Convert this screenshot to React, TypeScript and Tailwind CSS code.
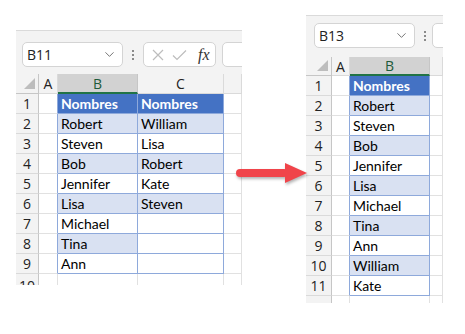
import React from 'react';
import { ChevronDown } from 'lucide-react';

type Cell = { text?: string; band?: boolean; inTable?: boolean };

type SheetProps = {
  nameBox: string;
  showFx: boolean;
  colWidths: number[];
  letters: string[];
  selectedCol: number;
  headerH: number;
  rows: Cell[][];
  extraRow: number;
  barH: number;
  boxTop: string;
  boxH: string;
  dotsGap: string;
};

const fontCell = { fontFamily: 'Lato, "Liberation Sans", sans-serif' };
const fontUi = { fontFamily: '"Open Sans", "Noto Sans", sans-serif' };

const Dots = () => (
  <div className="flex flex-col gap-[2px] items-center">
    <span className="w-[2px] h-[2px] bg-[#8a8a8a]" />
    <span className="w-[2px] h-[2px] bg-[#8a8a8a]" />
    <span className="w-[2px] h-[2px] bg-[#8a8a8a]" />
  </div>
);

const Sheet: React.FC<SheetProps> = ({ nameBox, showFx, colWidths, letters, selectedCol, headerH, rows, extraRow, barH, boxTop, boxH, dotsGap }) => {
  const template = colWidths.map((w) => `${w}px`).join(' ');
  return (
    <div className="bg-[#f3f3f3] border-t border-[#dadada] overflow-hidden flex flex-col" style={{ width: colWidths.reduce((a, b) => a + b, 0) }}>
      {/* formula bar */}
      <div className={`flex items-start shrink-0 ${boxTop}`} style={{ height: barH }}>
        <div className={`w-[101px] shrink-0 ${boxH} bg-white border border-[#d4d4d4] rounded-[5px] flex items-center justify-between pl-[4px] pr-[5px] text-[14px] text-[#222]`} style={fontUi}>
          <span>{nameBox}</span>
          <ChevronDown size={15} strokeWidth={1.3} className="text-[#555]" />
        </div>
        <div className={`${dotsGap} flex items-center shrink-0 ${boxH}`}>
          <Dots />
        </div>
        {showFx && (
          <div className={`ml-[9px] w-[73px] ${boxH} bg-white border border-[#d4d4d4] rounded-[5px] flex items-center pl-[7px] gap-[8px] shrink-0`}>
            <svg width="12" height="12" viewBox="0 0 12 12" className="ml-[1px]">
              <path d="M1 1 L11 11 M11 1 L1 11" stroke="#bdbdbd" strokeWidth="1.2" fill="none" />
            </svg>
            <svg width="15" height="12" viewBox="0 0 15 12">
              <path d="M1 6.5 L5 10.5 L14 1.5" stroke="#bdbdbd" strokeWidth="1.2" fill="none" />
            </svg>
            <span className="italic text-[16px] text-[#333] ml-[3px]" style={{ fontFamily: '"Liberation Serif", serif' }}>fx</span>
          </div>
        )}
        <div className={`ml-[6px] w-[40px] ${boxH} bg-white border border-[#d4d4d4] rounded-[5px] shrink-0`} />
      </div>
      {/* grid */}
      <div className="grid bg-white" style={{ gridTemplateColumns: template }}>
        {/* column headers */}
        <div className="bg-[#f3f3f3] border-r border-b border-[#c6c6c6] relative" style={{ height: headerH }}>
          <svg width="11" height="11" viewBox="0 0 11 11" className="absolute right-[3px] bottom-[4px]">
            <polygon points="11,0 11,11 0,11" fill="#bdbdbd" />
          </svg>
        </div>
        {letters.map((l, i) => (
          <div
            key={l}
            className={`flex items-center justify-center text-[14px] ${
              i === selectedCol
                ? 'bg-[#d2d2d2] text-[#1e5b3a] border-b-2 border-b-[#217346] border-r border-r-[#c6c6c6]'
                : 'bg-[#f3f3f3] text-[#222] border-b border-r border-[#dadada]'
            }`}
            style={{ ...fontUi, height: headerH }}
          >
            {l}
          </div>
        ))}
        {/* rows */}
        {rows.map((cells, r) => (
          <React.Fragment key={r}>
            <div className="h-[20px] bg-[#f3f3f3] border-r border-r-[#c6c6c6] border-b border-b-[#dadada] flex items-center justify-center text-[14px] text-[#222]" style={fontUi}>
              {r + 1}
            </div>
            {cells.map((c, j) => {
              const next = cells[j + 1];
              const header = r === 0 && c.inTable;
              let cls = 'h-[20px] border-b border-r flex items-center pl-[3px] text-[14px] leading-none whitespace-nowrap ';
              if (header) cls += 'bg-[#4472c4] text-white font-bold border-b-[#8ea9db] border-r-[#8ea9db]';
              else if (c.inTable) cls += `${c.band ? 'bg-[#d9e1f2]' : 'bg-white'} text-black border-b-[#8ea9db] border-r-[#8ea9db]`;
              else if (next && next.inTable) cls += 'bg-white border-b-[#e1e1e1] border-r-[#8ea9db]';
              else cls += 'bg-white border-[#e1e1e1]';
              return (
                <div key={j} className={cls} style={fontCell}>
                  {c.text}
                </div>
              );
            })}
          </React.Fragment>
        ))}
        <div className="bg-[#f3f3f3] border-r border-[#c6c6c6] flex justify-center text-[14px] text-[#222] pt-[1px]" style={{ ...fontUi, height: extraRow }}>
          {rows.length + 1}
        </div>
        {letters.map((l) => (
          <div key={l} className="bg-white border-r border-[#e1e1e1]" style={{ height: extraRow }} />
        ))}
      </div>
    </div>
  );
};

const leftData: [string, string][] = [
  ['Nombres', 'Nombres'],
  ['Robert', 'William'],
  ['Steven', 'Lisa'],
  ['Bob', 'Robert'],
  ['Jennifer', 'Kate'],
  ['Lisa', 'Steven'],
  ['Michael', ''],
  ['Tina', ''],
  ['Ann', ''],
];

const rightData = ['Nombres', 'Robert', 'Steven', 'Bob', 'Jennifer', 'Lisa', 'Michael', 'Tina', 'Ann', 'William', 'Kate'];

const leftRows: Cell[][] = leftData.map(([b, c], i) => {
  const n = i + 1;
  return [
    {},
    { text: b, inTable: true, band: n % 2 === 0 },
    { text: c, inTable: true, band: n % 2 === 0 && n < 7 },
    {},
  ];
});

const rightRows: Cell[][] = rightData.map((b, i) => [{}, { text: b, inTable: true, band: (i + 1) % 2 === 0 }, {}]);

const Arrow = () => (
  <svg width="84" height="36" viewBox="0 0 84 36" className="absolute left-[230px] top-[156px]" style={{ filter: 'drop-shadow(1px 2px 1.5px rgba(0,0,0,0.3))' }}>
    <rect x="6" y="13" width="52" height="8" rx="4" fill="#f0444a" />
    <polygon points="55,7 77,17 55,27" fill="#f0444a" />
  </svg>
);

export default function App() {
  return (
    <div className="w-[465px] h-[334px] bg-white relative overflow-hidden flex items-start">
      <div className="ml-[16px] mt-[30px] h-[255px] overflow-hidden">
        <Sheet
          nameBox="B11"
          showFx
          colWidths={[23, 19, 80, 86, 18]}
          letters={['A', 'B', 'C', '']}
          selectedCol={1}
          headerH={20}
          rows={leftRows}
          extraRow={12}
          barH={43}
          boxTop="pt-[11px] pl-[6px]"
          boxH="h-[25px]"
          dotsGap="ml-[9px]"
        />
      </div>
      <div className="ml-[64px] mt-[15px] h-[288px] overflow-hidden">
        <Sheet
          nameBox="B13"
          showFx={false}
          colWidths={[26, 18, 80, 13]}
          letters={['A', 'B', '']}
          selectedCol={1}
          headerH={19}
          rows={rightRows}
          extraRow={9}
          barH={41}
          boxTop="pt-[7px] pl-[8px]"
          boxH="h-[25px]"
          dotsGap="ml-[9px]"
        />
      </div>
      <Arrow />
    </div>
  );
}
